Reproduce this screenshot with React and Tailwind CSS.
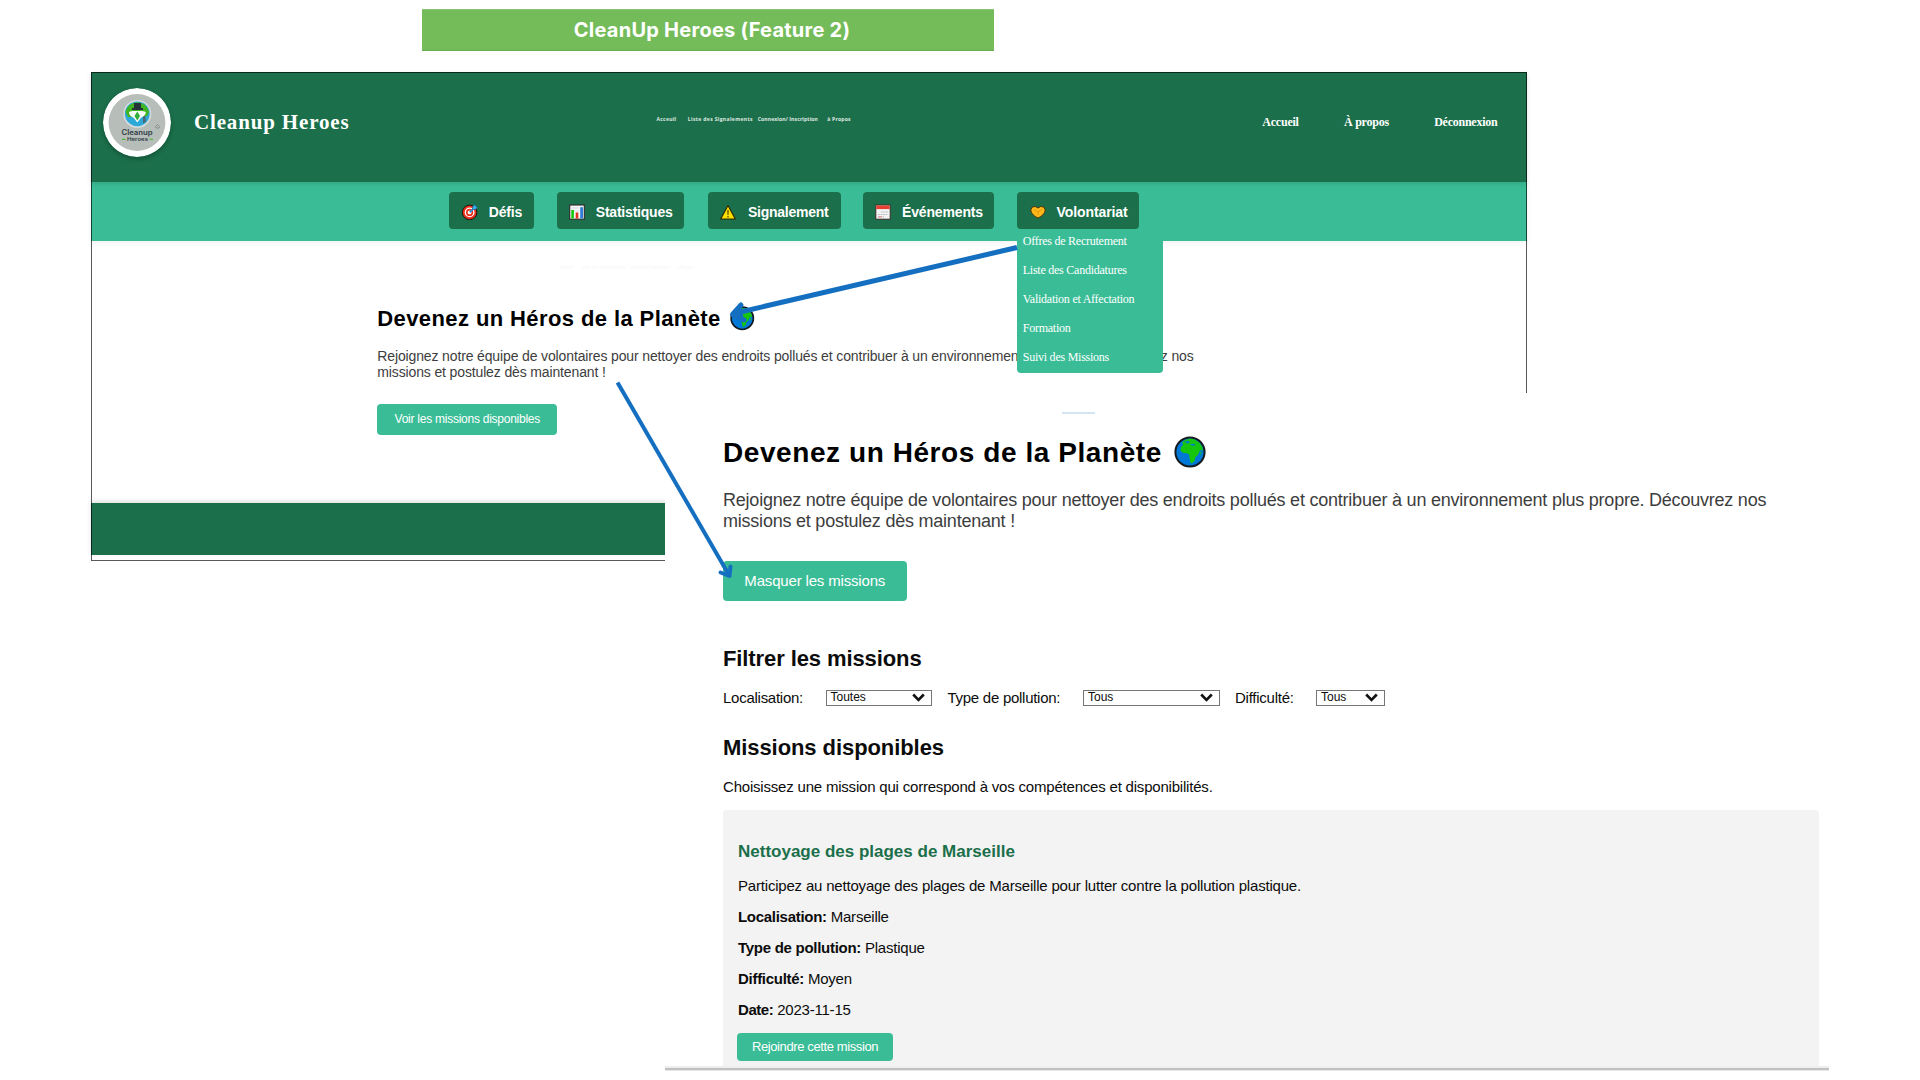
import React from "react";

const SANS = "font-['Liberation_Sans',Arial,sans-serif]";
const SERIF = "font-['Liberation_Serif','Times_New_Roman',serif]";

function Globe({ className }) {
  return (
    <svg viewBox="0 0 32 32" preserveAspectRatio="none" className={className}>
      <circle cx="16" cy="16" r="14.6" fill="#0078d7" stroke="#141a1e" strokeWidth="2" />
      <path d="M8 6.5 11 4l5-1.4 4 .6 5 3 3.2 4.5.8 4-2.2-1-1.600 2-1.200 3.400-2.600 2-.6 3.500-2.600 2.600h-1.600l-1-4.600-.4-4-2.200-1.400-3.600-.2L6.600 15l.3-4 2.300-2.300z" fill="#16c60c" />
      <path d="m10 6 4-1.200 2 1.200-2 1.500zM15.500 8.500l4-.8 2.500 1.600-3 .4z" fill="#0078d7" />
      <path d="M25.600 16.500l1.200-1.500 1 2-1 3z" fill="#16c60c" opacity=".6" />
    </svg>
  );
}

function Target() {
  return (
    <svg viewBox="0 0 16 16" className="mt-[2px] size-4 shrink-0">
      <circle cx="7.600" cy="8.400" r="7.300" fill="#e8301c" stroke="#1b1512" strokeWidth="1" />
      <circle cx="7.600" cy="8.400" r="4.900" fill="#fff" />
      <circle cx="7.600" cy="8.400" r="3.600" fill="#e8301c" />
      <circle cx="7.600" cy="8.400" r="1.900" fill="#fff" />
      <path d="M7.800 8.400 12 4" stroke="#2b8fd6" strokeWidth="1.800" />
      <path d="m10.300 5.700.4-3.200L13 .6l.7 1.700 1.800.7-2 2.400z" fill="#35b3f0" stroke="#1d5c86" strokeWidth=".6" />
    </svg>
  );
}

function Bars() {
  return (
    <svg viewBox="0 0 16 16" className="mt-[2px] size-4 shrink-0">
      <rect x=".7" y="1" width="14.600" height="14.200" fill="#f4f4f4" stroke="#2a2a2a" strokeWidth="1.100" />
      <path d="M1.500 4h8M1.500 7h8" stroke="#ccd" strokeWidth=".6" />
      <rect x="2.300" y="6" width="2.600" height="8.500" fill="#16c60c" />
      <rect x="6.700" y="8.500" width="2.600" height="6" fill="#e33222" />
      <rect x="11.200" y="3.200" width="2.800" height="11.300" fill="#2f7fd8" />
    </svg>
  );
}

function Warning() {
  return (
    <svg viewBox="0 0 16 16" className="mt-[3px] size-4 shrink-0">
      <path d="M8 1.600 15.300 15H.7z" fill="#fce100" stroke="#2a2600" strokeWidth="1.100" strokeLinejoin="round" />
      <path d="M8 6v4.700M8 12v1.500" stroke="#5b4a00" strokeWidth="1.300" />
    </svg>
  );
}

function Calendar() {
  return (
    <svg viewBox="0 0 16 16" className="mt-[3px] size-4 shrink-0">
      <rect x=".8" y="1" width="14.400" height="14.200" fill="#f4f4f4" stroke="#3a2a2a" strokeWidth="1" />
      <rect x="1.300" y="1.500" width="13.400" height="3.600" fill="#e8412f" />
      <path d="M6 8h7M3 10.500h10M3 12.800h6" stroke="#b9bcc2" strokeWidth="1.200" strokeDasharray="1.800 .7" />
      <path d="M3.500 12.800h3" stroke="#e88" strokeWidth="1.200" />
    </svg>
  );
}

function Heart() {
  return (
    <svg viewBox="0 0 16 16" className="mt-[2px] size-4 shrink-0">
      <path d="M8 14C4.500 12.500 1 9.500.8 5.800L2.300 3l3-.5L8 4l2.700-1.500 3 .5 1.500 2.800C15 9.500 11.500 12.500 8 14z" fill="#ffb81c" stroke="#4a3305" strokeWidth="1" strokeLinejoin="round" />
      <path d="M4 5.500 8 8l4-2.500M8 8v3" fill="none" stroke="#e08a00" strokeWidth=".7" />
    </svg>
  );
}

function Logo() {
  return (
    <svg viewBox="0 0 68 69" className="h-[69px] w-[68px] shrink-0 rounded-full shadow-[0_2px_4px_rgba(0,0,0,0.25)]">
      <ellipse cx="34" cy="34.500" rx="34" ry="34.500" fill="#fff" />
      <circle cx="34" cy="34.500" r="28.400" fill="#b7bdb8" />
      <circle cx="34.300" cy="26" r="14" fill="#d3dadd" />
      <circle cx="34.300" cy="25.800" r="12.400" fill="#2ba8d8" />
      <path d="M22.500 24a12 12 0 0 1 23.600 0l-2 4-4 1-11 0-4 0z" fill="#3fb61f" />
      <path d="M31 15h7v5h2v2H29v-2h2z" fill="#26323a" />
      <path d="M26 24c3-1.500 5-1 8.300-1s5.500-.5 8.500 1c0 3-2 4.500-5 6l-3.500 4.500-3.500-4.500c-3-1.500-4.800-3-4.800-6z" fill="#f7fbf8" />
      <path d="M34.300 23.500 37 28l-2.700 4.500L31.500 28z" fill="#2fae3a" />
      <path d="m40 29 2-1.500 1 6-3 2z" fill="#4b6672" />
      <path d="m52.500 38.500 2-2 2 2-.5 1.500h-3z" fill="none" stroke="#7a8580" strokeWidth=".8" />
      <text x="18.500" y="46.800" textLength="31" lengthAdjust="spacingAndGlyphs" fontSize="7.200" fontWeight="600" fontFamily="Inter, sans-serif" fill="#2c3b45">Cleanup</text>
      <text x="24" y="53" textLength="21" lengthAdjust="spacingAndGlyphs" fontSize="5" fontWeight="600" fontFamily="Inter, sans-serif" fill="#2c3b45">Heroes</text>
      <path d="M19 51.300h3.500M46.500 51.300H50" stroke="#3fb61f" strokeWidth="1" />
    </svg>
  );
}

function TinyLinks({ className }) {
  return (
    <div className={"flex whitespace-nowrap text-[5px] leading-[8px] font-bold font-['Open_Sans',sans-serif] " + className}>
      <span className="w-[31.3px] tracking-[0.27px]">Acceuil</span>
      <span className="w-[69.9px] tracking-[0.37px]">Liste des Signalements</span>
      <span className="w-[69.6px] tracking-[0.15px]">Connexion/ Inscription</span>
      <span className="tracking-[0.25px]">à Propos</span>
    </div>
  );
}

function NavButton({ icon, label, className, gap }) {
  return (
    <button className={"flex h-[36.700px] shrink-0 items-center rounded-[4px] bg-[#1b6f4a] text-[14px] font-bold whitespace-nowrap text-white " + className}>
      {icon}
      <span className={"pt-[3px] " + gap}>{label}</span>
    </button>
  );
}

function Chevron() {
  return (
    <svg viewBox="0 0 13 9" className="mr-[6px] h-[9px] w-[13px]">
      <path d="M1.200 1.500 6.500 6.800l5.300-5.300" fill="none" stroke="#111" strokeWidth="2.600" />
    </svg>
  );
}

function SelectBox({ value, className }) {
  return (
    <div className={"flex h-[16.500px] items-center justify-between border border-[#767676] bg-white pl-1 text-[12px] leading-[14px] " + className}>
      <span className="-mt-px">{value}</span>
      <Chevron />
    </div>
  );
}

function Detail({ label, value, className, labelClass }) {
  return (
    <p className={"text-[15px] leading-[20px] tracking-[-0.22px] whitespace-pre " + className}>
      <b className={labelClass}>{label}</b> {value}
    </p>
  );
}

function HomeScreen() {
  const menu = ["Offres de Recrutement", "Liste des Candidatures", "Validation et Affectation", "Formation", "Suivi des Missions"];
  return (
    <div className="relative mt-[21px] ml-[91px] flex h-[489px] w-[1436px] flex-col bg-white">
      <header className={"relative z-10 flex h-[110px] shrink-0 items-start bg-[#1b6f4a] pt-4 pl-[11.500px] text-white shadow-[0_2px_5px_rgba(0,0,0,0.12)] " + SERIF}>
        <Logo />
        <div className="mt-[20px] ml-[23.500px] w-[155.500px] text-[21px] leading-[28px] font-bold tracking-[0.84px] whitespace-nowrap">Cleanup Heroes</div>
        <TinyLinks className="mt-[27px] ml-[307px] text-white/85" />
        <nav className="mt-[24px] mr-[29.500px] ml-auto flex gap-[45.300px] text-[12px] leading-[20px] font-bold tracking-[-0.24px]">
          <span>Accueil</span>
          <span>À propos</span>
          <span>Déconnexion</span>
        </nav>
      </header>
      <nav className="flex h-[58.500px] shrink-0 bg-[#3abd96] pt-[10.300px] pl-[357.700px] shadow-[0_2px_5px_rgba(0,0,0,0.06)]">
        <NavButton icon={<Target />} label="Défis" gap="ml-[10.500px] tracking-[-0.19px]" className="mr-[22.700px] w-[85.600px] pl-[13.600px]" />
        <NavButton icon={<Bars />} label="Statistiques" gap="ml-[10.500px] tracking-[-0.21px]" className="mr-[23.500px] w-[127.500px] pl-[12.300px]" />
        <NavButton icon={<Warning />} label="Signalement" gap="ml-[11.500px] tracking-[-0.25px]" className="mr-[22px] w-[133px] pl-[12.500px]" />
        <NavButton icon={<Calendar />} label="Événements" gap="ml-[10.500px] tracking-[-0.15px]" className="mr-[23.600px] w-[130.700px] pl-[12.500px]" />
        <div className="relative">
          <NavButton icon={<Heart />} label="Volontariat" gap="ml-[10.500px] tracking-[-0.1px]" className="w-[121.400px] pl-[12.800px]" />
          <ul className={"absolute top-[36.700px] left-0 z-20 h-[144px] w-[145.700px] rounded-b-[4px] bg-[#3abd96] pt-[3px] pl-[5.500px] text-[12px] leading-[29px] tracking-[-0.245px] whitespace-nowrap text-white " + SERIF}>
            {menu.map((m) => (
              <li key={m} className="h-[28.900px] -translate-y-[5px]">{m}</li>
            ))}
          </ul>
        </div>
      </nav>
      <main className="pl-[286.300px]">
        <TinyLinks className="mt-[22px] -mb-[30px] ml-[183px] w-[195px] origin-left scale-x-[0.685] text-[#f9f9f9]" />
        <h1 className="mt-[64.500px] flex h-7 items-center text-[22px] leading-[28px] font-bold tracking-[0.4px] whitespace-nowrap text-black">
          Devenez un Héros de la Planète
          <Globe className="mt-[-1px] ml-[9.500px] h-[24.500px] w-[24.500px]" />
        </h1>
        <p className="mt-[15px] w-[850px] text-[14px] leading-[16px] tracking-[-0.136px] text-[#3d3d3d]">
          Rejoignez notre équipe de volontaires pour nettoyer des endroits pollués et contribuer à un environnement plus propre. Découvrez nos
          <br />
          missions et postulez dès maintenant !
        </p>
        <button className="mt-[23.500px] block h-[31px] w-[180px] rounded-[4px] bg-[#3abd96] text-[12px] tracking-[-0.25px] whitespace-nowrap text-white">Voir les missions disponibles</button>
      </main>
      <footer className="mt-auto mb-[6.500px] h-[51.500px] bg-[#1b6f4a] shadow-[0_-2px_5px_rgba(0,0,0,0.12)]" />
      <div className="pointer-events-none absolute inset-0 z-10 border border-black/65" />
    </div>
  );
}

function MissionsScreen() {
  return (
    <div className="absolute top-[393px] left-[665px] z-20 flex h-[678px] w-[1164px] flex-col bg-white">
      <div className="absolute top-[19px] left-[397px] h-[2px] w-[33px] bg-[#d3e4f4]" />
      <div className="flex flex-1 flex-col pr-[10.500px] pl-[58px]">
        <h1 className="mt-[43.700px] flex h-8 items-center text-[28px] leading-[32px] font-bold tracking-[0.57px] whitespace-nowrap text-black">
          Devenez un Héros de la Planète
          <Globe className="mt-[-1px] ml-[12px] h-[32px] w-[32px]" />
        </h1>
        <p className="mt-[21.600px] text-[18px] leading-[20.700px] tracking-[-0.223px] whitespace-nowrap text-[#3d3d3d]">
          Rejoignez notre équipe de volontaires pour nettoyer des endroits pollués et contribuer à un environnement plus propre. Découvrez nos
          <br />
          missions et postulez dès maintenant !
        </p>
        <button className="mt-[29.300px] h-[40px] w-[183.500px] shrink-0 rounded-[4px] bg-[#3abd96] text-[15px] tracking-[-0.17px] text-white">Masquer les missions</button>
        <h2 className="mt-[43.700px] text-[22px] leading-[28px] font-bold tracking-[-0.1px]">Filtrer les missions</h2>
        <div className="mt-[17px] flex h-[17px] text-[15px] leading-[16px] whitespace-nowrap">
          <span className="w-[102.500px] tracking-[-0.26px]">Localisation:</span>
          <SelectBox value="Toutes" className="mr-[15.500px] w-[106.500px]" />
          <span className="w-[135.500px] tracking-[-0.27px]">Type de pollution:</span>
          <SelectBox value="Tous" className="mr-[15px] w-[137px]" />
          <span className="w-[81px] tracking-[-0.25px]">Difficulté:</span>
          <SelectBox value="Tous" className="w-[68.500px]" />
        </div>
        <h2 className="mt-[27.500px] text-[22px] leading-[28px] font-bold tracking-[-0.075px]">Missions disponibles</h2>
        <p className="mt-[15px] text-[15px] leading-[20px] tracking-[-0.2px]">Choisissez une mission qui correspond à vos compétences et disponibilités.</p>
        <section className="mt-[13px] flex-1 rounded-t-[4px] bg-[#f3f3f3] pt-[32px] pl-[15px]">
          <h3 className="text-[17px] leading-[20px] font-bold text-[#1b6f4a]">Nettoyage des plages de Marseille</h3>
          <p className="mt-[13.700px] text-[15px] leading-[20px] tracking-[-0.193px]">Participez au nettoyage des plages de Marseille pour lutter contre la pollution plastique.</p>
          <Detail label="Localisation:" value="Marseille" className="mt-[11.300px]" labelClass="tracking-[-0.29px]" />
          <Detail label="Type de pollution:" value="Plastique" className="mt-[11.200px]" labelClass="tracking-[-0.28px]" />
          <Detail label="Difficulté:" value="Moyen" className="mt-[10.600px]" labelClass="tracking-[-0.29px]" />
          <Detail label="Date:" value="2023-11-15" className="mt-[11px]" labelClass="tracking-[-0.45px]" />
          <button className="mt-[13.200px] -ml-px block h-[27.500px] w-[156px] rounded-[4px] bg-[#3abd96] text-[13px] tracking-[-0.39px] text-white">Rejoindre cette mission</button>
        </section>
      </div>
      <div className="h-[5px] shrink-0 border-t-2 border-b border-t-[#eeeeee] border-b-[#e8e8e8] bg-[#c0c0c0]" />
    </div>
  );
}

function Arrows() {
  return (
    <svg viewBox="0 0 1920 1080" className="pointer-events-none absolute inset-0 z-30 h-[1080px] w-[1920px]" fill="none" stroke="#156fc0">
      <path d="M1017 247.500 736 313" strokeWidth="5" />
      <path d="M741 305 732.500 314.500 744 320" strokeWidth="5" strokeLinejoin="round" strokeLinecap="round" fill="#156fc0" />
      <path d="M617.500 382.500 729 575" strokeWidth="4" />
      <path d="M720.500 572.500 729.500 576 730.500 566.500" strokeWidth="4" strokeLinecap="round" strokeLinejoin="round" />
    </svg>
  );
}

export default function App() {
  return (
    <div className={"relative h-[1080px] w-[1920px] overflow-hidden bg-white text-[#0c0c0c] " + SANS}>
      <div className="flex flex-col pt-[9px]">
        <div className="ml-[422px] flex h-[42px] w-[572px] items-center justify-center border-y border-t-[#8cc573] border-b-[#68ae4d] bg-[#74bb59] pl-[8px] font-['Inter',sans-serif] text-[20px] font-bold tracking-[0.25px] text-white">
          CleanUp Heroes (Feature 2)
        </div>
        <HomeScreen />
      </div>
      <MissionsScreen />
      <Arrows />
    </div>
  );
}
